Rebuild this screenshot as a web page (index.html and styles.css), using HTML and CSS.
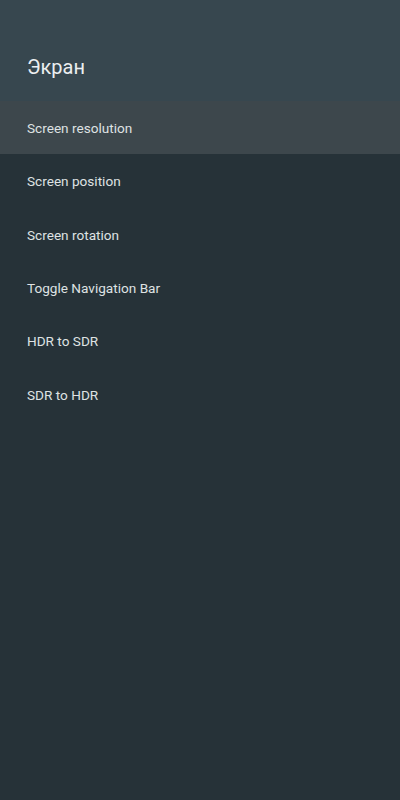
FILE: index.html
```html
<!DOCTYPE html>
<html lang="ru">
<head>
  <meta charset="UTF-8" />
  <meta name="viewport" content="width=device-width, initial-scale=1" />
  <title>Экран</title>
  <link rel="stylesheet" href="styles.css">
</head>
<body>
  <header class="panel-header">
    <h1>Экран</h1>
  </header>
  <ul class="menu">
    <li class="menu-item active">Screen resolution</li>
    <li class="menu-item">Screen position</li>
    <li class="menu-item">Screen rotation</li>
    <li class="menu-item">Toggle Navigation Bar</li>
    <li class="menu-item">HDR to SDR</li>
    <li class="menu-item">SDR to HDR</li>
  </ul>
</body>
</html>
```

FILE: styles.css
```css
/* Settings side panel */
body {
  margin: 0;
  padding: 0;
  height: 800px;
  background-color: #263238;
  font-family: Roboto, 'Noto Sans', sans-serif;
  color: #e8eaeb;
}
.panel-header {
  height: 101px;
  background-color: #37474f;
  padding: 55px 27px 0;
  box-sizing: border-box;
}
.panel-header h1 {
  margin: 0;
  font-size: 20px;
  line-height: 24px;
  font-weight: normal;
  color: #eceff1;
}
.menu {
  list-style: none;
  margin: 0;
  padding: 0;
}
.menu-item {
  height: 53.3px;
  display: flex;
  align-items: center;
  padding: 1px 27px 0;
  box-sizing: border-box;
  font-size: 13.6px;
  color: #dfe2e3;
}
.menu-item.active {
  background-color: #3d474c;
}
```
